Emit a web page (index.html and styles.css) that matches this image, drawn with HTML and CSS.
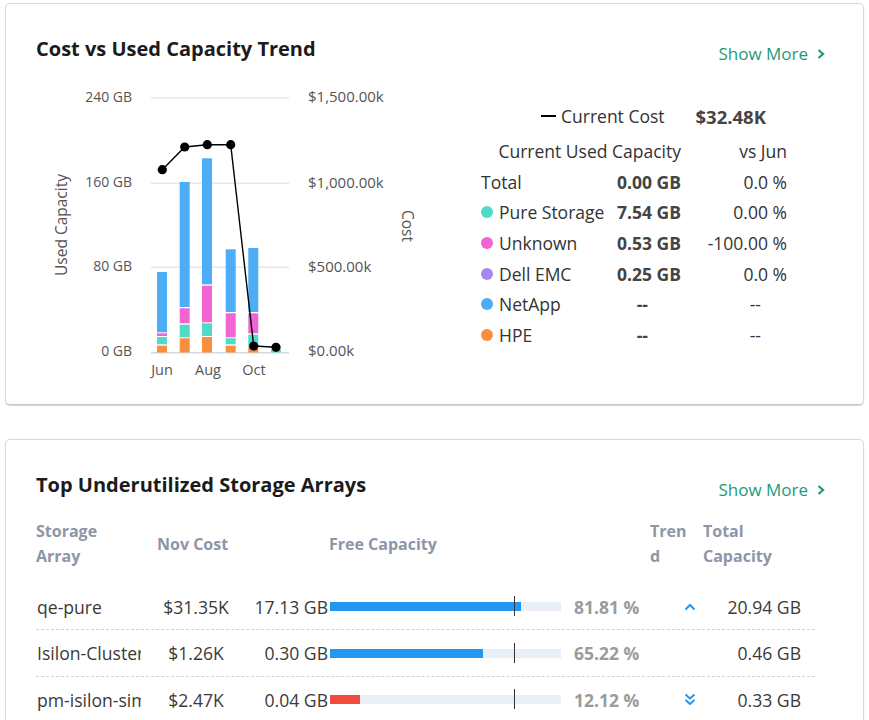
FILE: index.html
```html
<!DOCTYPE html>
<html lang="en">
<head>
<meta charset="utf-8">
<title>Storage Dashboard</title>
<link rel="stylesheet" href="styles.css">
</head>
<body>
<div class="page">
  <section class="card card-trend">
    <div class="card-head">
      <h2 class="card-title">Cost vs Used Capacity Trend</h2>
      <a class="show-more">Show More <svg class="chev" width="8" height="10" viewBox="0 0 8 10"><polyline points="1.5,1 6,5 1.5,9" fill="none" stroke="currentColor" stroke-width="2.3"/></svg></a>
    </div>
    <div class="trend-body">
      <svg class="chart" width="400" height="310" viewBox="36 80 400 310">
        <g class="grid">
          <line x1="151" y1="97.7" x2="289" y2="97.7"/>
          <line x1="151" y1="183.3" x2="289" y2="183.3"/>
          <line x1="151" y1="267.3" x2="289" y2="267.3"/>
        </g>
        <line class="base" x1="151" y1="352.8" x2="289" y2="352.8"/>
        <g class="ticks-left" text-anchor="end">
          <text x="132" y="98">240 GB</text>
          <text x="132" y="183.5">160 GB</text>
          <text x="132" y="267.5">80 GB</text>
          <text x="132" y="352">0 GB</text>
        </g>
        <g class="ticks-right">
          <text x="308" y="98">$1,500.00k</text>
          <text x="308" y="183.5">$1,000.00k</text>
          <text x="308" y="267.5">$500.00k</text>
          <text x="308" y="352">$0.00k</text>
        </g>
        <text class="axis-title" x="63" y="225" text-anchor="middle" transform="rotate(-90 63 225)">Used Capacity</text>
        <text class="axis-title" x="405.7" y="226" text-anchor="middle" transform="rotate(90 405.7 226)">Cost</text>
        <g class="ticks-x" text-anchor="middle">
          <text x="162" y="371">Jun</text>
          <text x="208" y="371">Aug</text>
          <text x="254" y="371">Oct</text>
        </g>
        <g class="bars">
          <rect class="s-blue" x="157" y="272" width="10" height="60.3"/>
          <rect class="s-pink" x="157" y="333.3" width="10" height="2.7"/>
          <rect class="s-teal" x="157" y="337" width="10" height="7.3"/>
          <rect class="s-orange" x="157" y="345.7" width="10" height="6.8"/>

          <rect class="s-blue" x="179.7" y="182" width="10" height="125"/>
          <rect class="s-pink" x="179.7" y="308.3" width="10" height="15"/>
          <rect class="s-teal" x="179.7" y="324.7" width="10" height="12.6"/>
          <rect class="s-orange" x="179.7" y="338.3" width="10" height="14.2"/>

          <rect class="s-blue" x="202" y="158.3" width="10" height="126"/>
          <rect class="s-pink" x="202" y="285.7" width="10" height="36.6"/>
          <rect class="s-teal" x="202" y="323.3" width="10" height="12.7"/>
          <rect class="s-orange" x="202" y="337" width="10" height="15.5"/>

          <rect class="s-blue" x="225.7" y="249.3" width="10" height="62.7"/>
          <rect class="s-pink" x="225.7" y="313.3" width="10" height="24"/>
          <rect class="s-teal" x="225.7" y="338.3" width="10" height="6"/>
          <rect class="s-orange" x="225.7" y="345.7" width="10" height="6.8"/>

          <rect class="s-blue" x="248.3" y="248" width="10" height="64"/>
          <rect class="s-pink" x="248.3" y="313.3" width="10" height="20"/>
          <rect class="s-teal" x="248.3" y="334.7" width="10" height="12"/>
          <rect class="s-orange" x="248.3" y="347" width="10" height="5.5"/>

          <rect class="s-teal" x="271" y="349.5" width="10" height="3"/>
        </g>
        <polyline class="cost-line-path" points="162.3,169.7 184.7,147 207.3,144.7 230.7,144.7 253.7,346 276,347.3"/>
        <g class="dots">
          <circle cx="162.3" cy="169.7" r="4.6"/>
          <circle cx="184.7" cy="147" r="4.6"/>
          <circle cx="207.3" cy="144.7" r="4.6"/>
          <circle cx="230.7" cy="144.7" r="4.6"/>
          <circle cx="253.7" cy="346" r="4.6"/>
          <circle cx="276" cy="347.3" r="4.6"/>
        </g>
      </svg>
      <div class="legend">
        <div class="cost-row">
          <span class="cost-mark"></span>
          <span class="cost-label">Current Cost</span>
          <strong class="cost-value">$32.48K</strong>
        </div>
        <div class="legend-grid">
          <div class="lg-head">Current Used Capacity</div>
          <div class="lg-pct">vs Jun</div>

          <div class="lg-name">Total</div>
          <div class="lg-val">0.00 GB</div>
          <div class="lg-pct">0.0 %</div>

          <div class="lg-name"><span class="dot dot-teal"></span>Pure Storage</div>
          <div class="lg-val">7.54 GB</div>
          <div class="lg-pct">0.00 %</div>

          <div class="lg-name"><span class="dot dot-pink"></span>Unknown</div>
          <div class="lg-val">0.53 GB</div>
          <div class="lg-pct">-100.00 %</div>

          <div class="lg-name"><span class="dot dot-purple"></span>Dell EMC</div>
          <div class="lg-val">0.25 GB</div>
          <div class="lg-pct">0.0 %</div>

          <div class="lg-name"><span class="dot dot-blue"></span>NetApp</div>
          <div class="lg-val lg-empty">--</div>
          <div class="lg-pct lg-empty">--</div>

          <div class="lg-name"><span class="dot dot-orange"></span>HPE</div>
          <div class="lg-val lg-empty">--</div>
          <div class="lg-pct lg-empty">--</div>
        </div>
      </div>
    </div>
  </section>

  <section class="card card-table">
    <div class="card-head">
      <h2 class="card-title">Top Underutilized Storage Arrays</h2>
      <a class="show-more">Show More <svg class="chev" width="8" height="10" viewBox="0 0 8 10"><polyline points="1.5,1 6,5 1.5,9" fill="none" stroke="currentColor" stroke-width="2.3"/></svg></a>
    </div>
    <div class="table">
      <div class="thead">
        <div class="th th-name">Storage<br>Array</div>
        <div class="th th-cost">Nov Cost</div>
        <div class="th th-free">Free Capacity</div>
        <div class="th th-trend">Trend</div>
        <div class="th th-total">Total<br>Capacity</div>
      </div>

      <div class="trow">
        <div class="td td-name">qe-pure</div>
        <div class="td td-cost">$31.35K</div>
        <div class="td td-gb">17.13 GB</div>
        <div class="td td-bar"><div class="bar"><div class="bar-fill" style="width:191px"></div><span class="bar-mark"></span></div></div>
        <div class="td td-pct">81.81 %</div>
        <div class="td td-trend"><svg width="12" height="8" viewBox="0 0 12 8"><polyline points="1.5,6.5 6,2 10.5,6.5" fill="none" stroke="#2196f3" stroke-width="2"/></svg></div>
        <div class="td td-total">20.94 GB</div>
      </div>

      <div class="trow">
        <div class="td td-name">Isilon-Cluster</div>
        <div class="td td-cost">$1.26K</div>
        <div class="td td-gb">0.30 GB</div>
        <div class="td td-bar"><div class="bar"><div class="bar-fill" style="width:153px"></div><span class="bar-mark"></span></div></div>
        <div class="td td-pct">65.22 %</div>
        <div class="td td-trend"></div>
        <div class="td td-total">0.46 GB</div>
      </div>

      <div class="trow">
        <div class="td td-name">pm-isilon-sim</div>
        <div class="td td-cost">$2.47K</div>
        <div class="td td-gb">0.04 GB</div>
        <div class="td td-bar"><div class="bar"><div class="bar-fill bar-low" style="width:30px"></div><span class="bar-mark"></span></div></div>
        <div class="td td-pct">12.12 %</div>
        <div class="td td-trend"><svg width="12" height="13" viewBox="0 0 12 13"><polyline points="1.5,1.5 6,5.5 10.5,1.5" fill="none" stroke="#2196f3" stroke-width="2"/><polyline points="1.5,7 6,11 10.5,7" fill="none" stroke="#2196f3" stroke-width="2"/></svg></div>
        <div class="td td-total">0.33 GB</div>
      </div>
    </div>
  </section>
</div>
</body>
</html>
```

FILE: styles.css
```css
* { box-sizing: border-box; }

html, body {
  margin: 0;
  padding: 0;
  background: #ffffff;
}

body {
  font-family: "Open Sans", "Noto Sans", sans-serif;
  color: #333333;
  overflow: hidden;
}

.page {
  padding: 3px 5px 0 5px;
  display: flex;
  flex-direction: column;
  gap: 34px;
}

.card {
  border: 1px solid #d4d9e1;
  border-bottom-color: #c3cad6;
  border-radius: 5px;
  box-shadow: 0 1px 1px rgba(120, 135, 160, 0.35);
  background: #fff;
  padding: 33px 30px 14px 30px;
}

.card-head {
  display: flex;
  justify-content: space-between;
  align-items: flex-start;
  padding-right: 8px;
}

.card-title {
  margin: 0;
  font-size: 20px;
  line-height: 24px;
  font-weight: 700;
  color: #1b1b1b;
}

.show-more {
  margin-top: 5px;
  font-size: 17px;
  line-height: 24px;
  color: #1b9b7c;
  display: flex;
  align-items: center;
  gap: 9px;
  text-decoration: none;
}

.chev { display: block; }

/* ---- trend card ---- */
.trend-body {
  display: flex;
  margin-top: 14px;
}

.chart {
  display: block;
  flex: none;
  font-family: "Open Sans", "Noto Sans", sans-serif;
}

.grid line {
  stroke: #e8e8e8;
  stroke-width: 1.5;
}

.base {
  stroke: #d6dae3;
  stroke-width: 1.5;
}

.ticks-left text,
.ticks-right text,
.ticks-x text,
.axis-title {
  font-size: 14px;
  fill: #555555;
  dominant-baseline: middle;
}

.ticks-right text { font-size: 15px; }
.ticks-x text { font-size: 14.5px; }
.chart .axis-title { font-size: 15.5px; }

.s-blue { fill: #4dadf7; }
.s-pink { fill: #f263d3; }
.s-teal { fill: #4fdbc8; }
.s-orange { fill: #f98e3e; }

.cost-line-path {
  fill: none;
  stroke: #000;
  stroke-width: 1.4;
}

.dots circle { fill: #000; }

.legend {
  margin-left: 45px;
  margin-top: 21px;
  font-size: 17.5px;
  color: #333;
}

.cost-row {
  display: flex;
  align-items: center;
  height: 30px;
  padding-left: 60px;
}

.cost-mark {
  width: 15px;
  height: 2px;
  background: #000;
  margin-right: 5px;
}

.cost-value {
  margin-left: 31px;
  font-size: 18.5px;
  font-weight: 700;
  color: #444;
}

.legend-grid {
  display: grid;
  grid-template-columns: 120px 80px 106px;
  grid-auto-rows: 30.6px;
  align-items: center;
  margin-top: 5px;
}

.lg-head {
  grid-column: 1 / 3;
  text-align: right;
}

.lg-name {
  display: flex;
  align-items: center;
  white-space: nowrap;
}

.lg-val {
  text-align: right;
  font-weight: 700;
  color: #444;
}

.lg-pct { text-align: right; }

.lg-val.lg-empty { padding-right: 33px; }
.lg-pct.lg-empty { padding-right: 26px; font-weight: 400; }

.dot {
  width: 12px;
  height: 12px;
  border-radius: 50%;
  margin-right: 6px;
  flex: none;
}
.dot-teal { background: #4fdbc8; }
.dot-pink { background: #f263d3; }
.dot-purple { background: #a987f0; }
.dot-blue { background: #4dadf7; }
.dot-orange { background: #f98e3e; }

/* ---- table card ---- */
.table {
  margin-top: 17px;
  width: 779px;
}

.thead,
.trow {
  display: grid;
  grid-template-columns: 105px 110px 77px 233px 89px 53px 112px;
  align-items: center;
}

.thead {
  height: 50px;
  margin-bottom: 15px;
}

.th {
  font-size: 16px;
  line-height: 25px;
  font-weight: 700;
  color: #8d96a8;
}

.th-cost { padding-left: 16px; }
.th-free { grid-column: 4 / 6; padding-left: 1px; }
.th-trend {
  width: 40px;
  word-break: break-all;
}

.trow {
  height: 46px;
  border-bottom: 1px dashed #ccd2dc;
  font-size: 17.6px;
  color: #3a3a3a;
}

.trow:nth-child(3) { height: 47px; }

.td-name {
  overflow: hidden;
  white-space: nowrap;
  padding-left: 1px;
}

.td-cost { text-align: center; }
.td-gb { text-align: right; }

.td-bar { padding-left: 2px; }

.bar {
  position: relative;
  width: 231px;
  height: 9px;
  background: #e9eef7;
}

.bar-fill {
  height: 100%;
  background: #2196f3;
}

.bar-low { background: #f44c3c; }

.bar-mark {
  position: absolute;
  left: 184px;
  top: -6px;
  width: 1px;
  height: 20px;
  background: #333;
}

.td-pct {
  padding-left: 13px;
  font-size: 17.5px;
  font-weight: 700;
  color: #9b9b9b;
  white-space: nowrap;
}

.td-trend {
  display: flex;
  justify-content: flex-end;
  padding-right: 7px;
}

.td-trend svg { display: block; }

.td-total {
  text-align: right;
  padding-right: 14px;
}
```
